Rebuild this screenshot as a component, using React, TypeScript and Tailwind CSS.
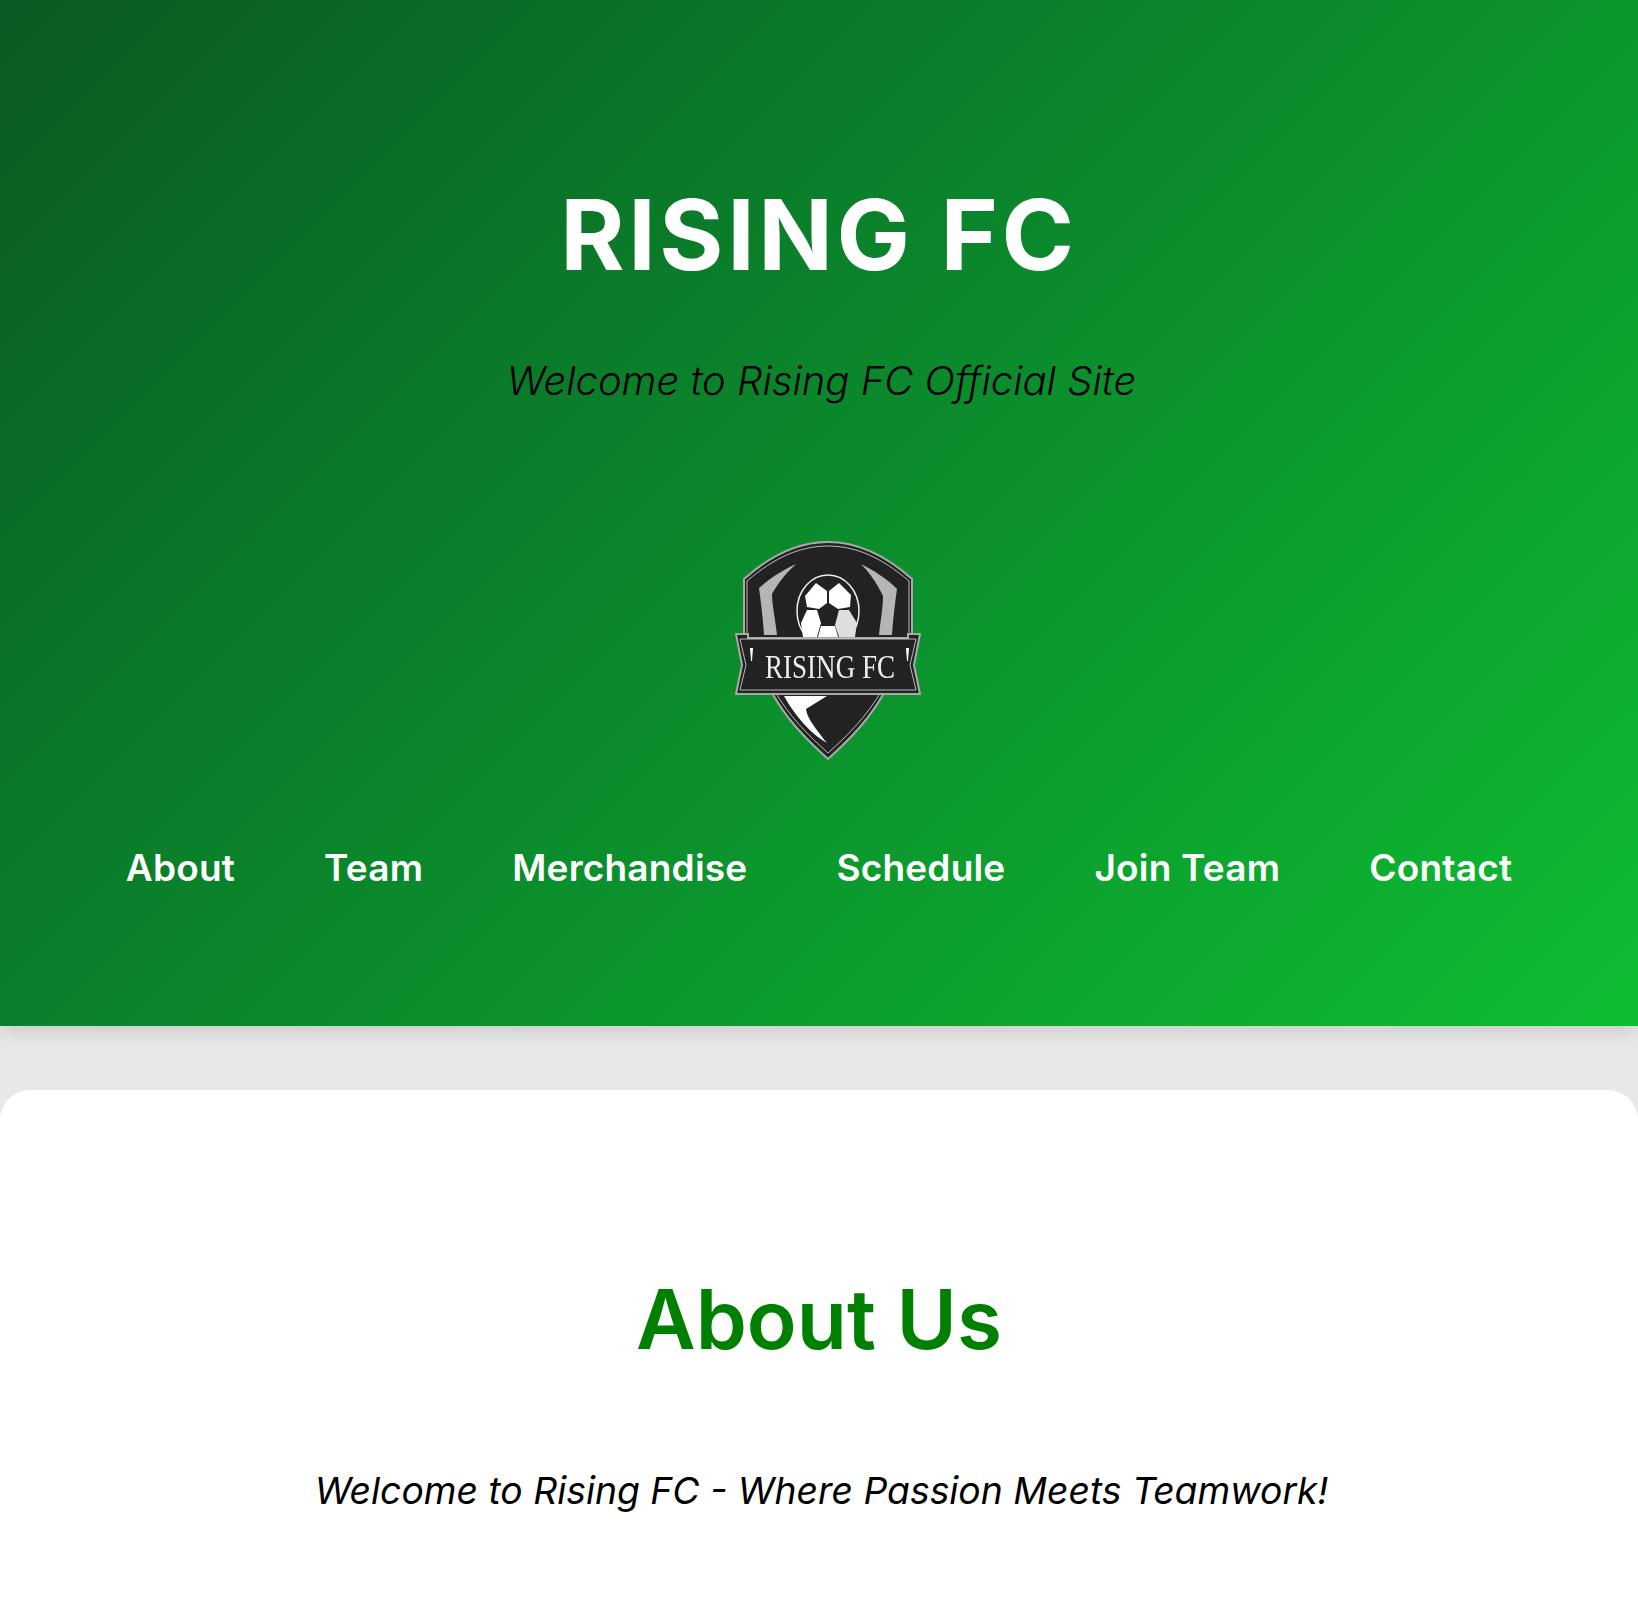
const Logo = () => (
  <svg viewBox="0 0 186 219" className="w-[186px] h-[219px] block blur-[0.4px]">
    {/* shield */}
    <path d="M9 38 C38 12 65 1 93 1 C121 1 148 12 177 38 L177 100 L150 150 C135 178 115 198 93 218 C71 198 51 178 36 150 L9 100 Z" fill="#222" stroke="#a9a9a9" strokeWidth="2" />
    <path d="M12 40 C40 16 66 5 93 5 C120 5 146 16 174 40 L174 100 L147 149 C132 175 113 194 93 212 C73 194 54 175 39 149 L12 100 Z" fill="none" stroke="#e4e4e4" strokeWidth="0.8" />
    {/* grey wings */}
    <path d="M61 23 C46 30 34 38 24 47 C26 62 28 78 29 94 L42 94 C40 76 37 64 37 53 C43 42 52 31 61 23 Z" fill="#b5b5b5" />
    <path d="M126 23 C140 30 152 38 162 48 C160 62 158 78 157 94 L144 94 C146 76 148 66 148 55 C142 42 134 31 126 23 Z" fill="#b5b5b5" />
    {/* ball */}
    <g transform="translate(0 2)">
      <ellipse cx="93" cy="68" rx="31" ry="36" fill="#222" stroke="#eee" strokeWidth="1.5" />
      <path d="M81 40 L92 48 L92 60 L84 66 L72 64 L70 53 Z" fill="#fff" />
      <path d="M104 40 L116 52 L115 64 L103 66 L94 60 L94 48 Z" fill="#fff" />
      <path d="M72 67 L82 67 L86 80 L82 94 L68 94 L66 80 Z" fill="#fff" />
      <path d="M104 67 L114 67 L122 80 L120 94 L104 94 L100 82 Z" fill="#dedede" />
      <path d="M86 83 L100 83 L103 94 L83 94 Z" fill="#fff" />
    </g>
    {/* ribbon */}
    <path d="M1 93 L13 93 L13 97 L173 97 L173 93 L185 93 L179 124 L185 153 L1 153 L7 124 Z" fill="#222" stroke="#a9a9a9" strokeWidth="2" />
    <path d="M5 98 L181 98 L175 124 L181 149 L5 149 L11 124 Z" fill="none" stroke="#ddd" strokeWidth="0.8" />
    <path d="M15 107 L18 107 L17 120 L16 120 Z" fill="#fff" />
    <path d="M171 107 L174 107 L173 120 L172 120 Z" fill="#fff" />
    <text transform="translate(95 137) scale(0.82 1)" textAnchor="middle" fill="#eee" fontSize="33" fontFamily="'Liberation Serif', serif">RISING FC</text>
    {/* swoosh */}
    <path d="M49 155 L92 155 L71 168 C72 175 76 182 92 202 C76 193 60 175 49 155 Z" fill="#fff" />
  </svg>
);

const navLinks = ["About", "Team", "Merchandise", "Schedule", "Join Team", "Contact"];

export default function App() {
  return (
    <div className="bg-[#e8e8e8] h-[1600px] overflow-hidden font-['Inter','Open_Sans',sans-serif]">
      <header className="h-[1026px] bg-[linear-gradient(135deg,#0a5a23,#0b8a2c_50%,#0ebe32)] shadow-[0_4px_20px_rgba(0,0,0,0.15)] flex flex-col items-center pt-[175px]">
        <h1 className="text-[98px] leading-[120px] font-bold text-white tracking-[3.6px]">RISING FC</h1>
        <p className="mt-[58px] ml-[5px] text-[40px] leading-[56px] italic font-light text-black">Welcome to Rising FC Official Site</p>
        <div className="mt-[132px] ml-[17px]">
          <Logo />
        </div>
        <nav className="mt-[81px] flex gap-[89px]">
          {navLinks.map((link) => (
            <a key={link} className="text-[37px] leading-[54px] font-semibold text-white tracking-[0.2px]">{link}</a>
          ))}
        </nav>
      </header>
      <main className="mt-[64px] bg-white rounded-t-[30px] h-[510px] flex flex-col items-center pt-[175px]">
        <h2 className="text-[82px] leading-[110px] font-semibold text-[#008000]">About Us</h2>
        <p className="mt-[89px] ml-[5px] text-[37.3px] leading-[54px] italic text-black">Welcome to Rising FC - Where Passion Meets Teamwork!</p>
        <div className="mt-[93px] self-end mr-[128px] w-[655px] h-[60px] bg-white rounded-[20px] shadow-[0_4px_30px_rgba(0,0,0,0.15)]"></div>
      </main>
    </div>
  );
}
